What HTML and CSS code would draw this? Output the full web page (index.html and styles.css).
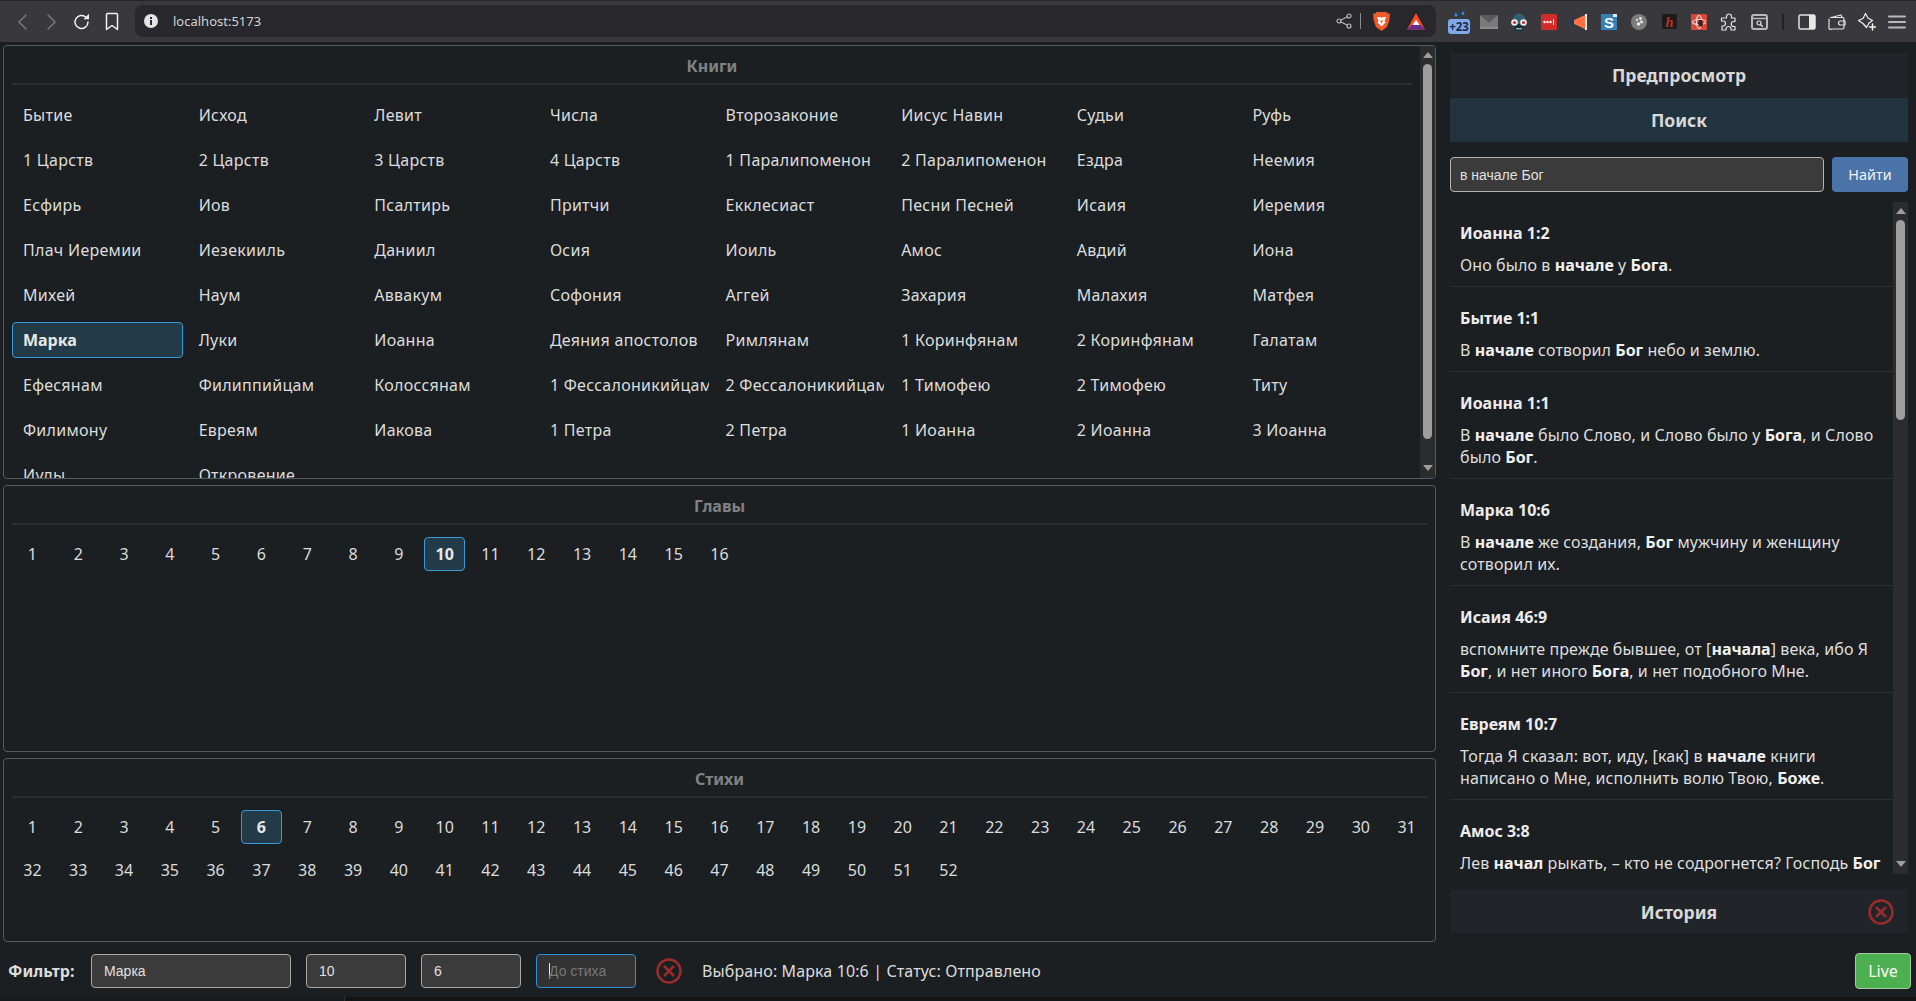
FILE: index.html
```html
<!DOCTYPE html>
<html lang="ru">
<head>
<meta charset="utf-8">
<title>localhost:5173</title>
<link rel="stylesheet" href="styles.css">
</head>
<body>
<header class="toolbar">
  <div class="nav">
    <span class="slot"><svg width="16" height="18" viewBox="0 0 16 18"><path d="M12 2 5 9l7 7" class="ln dim"/></svg></span>
    <span class="slot"><svg width="16" height="18" viewBox="0 0 16 18"><path d="m4 2 7 7-7 7" class="ln dim"/></svg></span>
    <span class="slot"><svg width="20" height="20" viewBox="0 0 20 20"><path d="M16 10a6.500 6.500 0 1 1-2-4.700" class="ln white"/><path d="M11.500 7.200h5.500V1.800z" class="fill-white"/></svg></span>
    <span class="slot"><svg width="16" height="20" viewBox="0 0 16 20"><path d="M2.500 2.500a1 1 0 0 1 1-1h9a1 1 0 0 1 1 1v15L8 13.500 2.500 17.500z" class="ln white"/></svg></span>
  </div>
  <div class="omnibox">
    <svg class="info" width="14" height="14" viewBox="0 0 14 14"><circle cx="7" cy="7" r="7" fill="#e4e4e4"/><rect x="6" y="6" width="2" height="5" fill="#2a292e"/><rect x="6" y="3" width="2" height="2" fill="#2a292e"/></svg>
    <span class="url">localhost:5173</span>
    <span class="omni-end">
      <svg width="16" height="16" viewBox="0 0 16 16"><circle cx="13" cy="3" r="2" class="ln gray thin"/><circle cx="3" cy="8" r="2" class="ln gray thin"/><circle cx="13" cy="13" r="2" class="ln gray thin"/><path d="M5 7l6-3M5 9l6 3" class="ln gray thin"/></svg>
      <i class="omni-sep"></i>
      <svg class="brave" width="17" height="19" viewBox="0 0 17 19"><path d="M3.500 0h10l1.500 1.800 2 -.3-.6 6.500-2.400 7-5.500 4-5.500-4L.6 8 0 1.500l2 .3z" fill="#f0592a"/><path d="M4 5h3l1.500 1L10 5h3l-1.500 4 1 1.500L10 13l-1.500 1.500L7 13l-2.500-2.500 1-1.500z" fill="#fff"/><path d="M7 8.500h3l-1.500 3z" fill="#f0592a"/></svg>
      <svg class="bat" width="18" height="17" viewBox="0 0 18 17"><path d="M9 0 0 16.500h18z" fill="#ff4724"/><path d="M0 16.500 4.500 12h9l4.500 4.500z" fill="#662d91"/><path d="M9 6.500 5.500 12h7z" fill="#fff"/></svg>
    </span>
  </div>
  <div class="exts">
    <span class="slot badge-slot"><svg width="22" height="24" viewBox="0 0 22 24"><path d="M8 1.500 9.500 4a1.500 1.500 0 0 1-3 0zM15 0l1.500 2.500a1.500 1.500 0 0 1-3 0z" fill="#2f8fe6"/><rect x="0" y="8" width="22" height="15" rx="3" fill="#7fa9ea"/><text x="11" y="20" text-anchor="middle" class="badge-text">+23</text></svg></span>
    <span class="slot"><svg width="18" height="16" viewBox="0 0 18 16"><rect y="1" width="18" height="14" fill="#7a7a7a"/><path d="M0 1h18L9 9z" fill="#5b5b5b"/><path d="M0 15h18v-2H0z" fill="#8d8d8d"/></svg></span>
    <span class="slot"><svg width="20" height="20" viewBox="0 0 20 20"><path d="M3 10a7 8.500 0 0 1 14 0v3H3z" fill="#2f6170"/><path d="M5 12h10l-1 7H6z" fill="#1c3038"/><rect x="7" y="16" width="6" height="1.500" fill="#8aa"/><circle cx="5.500" cy="10.500" r="3.300" fill="#eee"/><circle cx="14.500" cy="10.500" r="3.300" fill="#eee"/><circle cx="5.500" cy="10.500" r="1.600" fill="#c0392b"/><circle cx="14.500" cy="10.500" r="1.600" fill="#c0392b"/></svg></span>
    <span class="slot"><svg width="16" height="16" viewBox="0 0 16 16"><rect width="16" height="16" rx="1.500" fill="#d32b27"/><circle cx="3.500" cy="8" r="1.200" fill="#fff"/><circle cx="6.500" cy="8" r="1.200" fill="#fff"/><circle cx="9.500" cy="8" r="1.200" fill="#fff"/><rect x="12" y="5" width="1" height="6" fill="#fff"/></svg></span>
    <span class="slot"><svg width="18" height="16" viewBox="0 0 18 16"><circle cx="4" cy="8" r="4" fill="#1d3a55"/><path d="M4 6 15 1v14L4 10z" fill="#ff7143"/><rect x="15" y="0" width="2" height="16" fill="#eee"/></svg></span>
    <span class="slot"><svg width="16" height="16" viewBox="0 0 16 16"><rect width="16" height="16" fill="#3680b8"/><rect x="12" width="4" height="3" fill="#e8e8e8"/><text x="8" y="14" text-anchor="middle" class="s-logo">S</text></svg></span>
    <span class="slot"><svg width="16" height="16" viewBox="0 0 16 16"><circle cx="8" cy="8" r="8" fill="#7d7d7d"/><circle cx="9.500" cy="4.500" r="1.400" fill="#eee"/><circle cx="6" cy="6" r="1.100" fill="#eee"/><circle cx="10.500" cy="8" r="1.400" fill="#eee"/><circle cx="7.500" cy="10" r="1.800" fill="#eee"/></svg></span>
    <span class="slot"><svg width="15" height="15" viewBox="0 0 15 15"><rect width="15" height="15" rx="1" fill="#1c1c1c"/><text x="7.500" y="12.500" text-anchor="middle" class="h-logo">h</text></svg></span>
    <span class="slot"><svg width="16" height="16" viewBox="0 0 16 16"><rect width="16" height="16" rx="1" fill="#d8473c"/><ellipse cx="8" cy="8" rx="6.500" ry="2.500" fill="none" stroke="#f6d5cf" stroke-width="1.200"/><ellipse cx="8" cy="8" rx="2.500" ry="6.500" fill="none" stroke="#f6d5cf" stroke-width="1.200"/><path d="M8 6h3l1 5-2 2-3-3z" fill="#3a2020"/></svg></span>
    <span class="slot"><svg width="18" height="18" viewBox="0 0 18 18"><path d="M6.500 3.500a2.500 2.500 0 0 1 5 0V5h3.500v3.500h-1.300a2.500 2.500 0 0 0 0 5H15V17h-4v-1a2.500 2.500 0 0 0-5 0v1H2v-4h1a2.500 2.500 0 0 0 0-5H1.500V5h5z" class="ln pale thin"/></svg></span>
    <span class="slot"><svg width="17" height="16" viewBox="0 0 17 16"><rect x="1" y="1" width="15" height="14" rx="2" class="ln gray thick"/><path d="M1 4.500h15" class="ln gray"/><circle cx="8" cy="9" r="2" class="ln pale thin"/><path d="m9.500 10.500 2 2" class="ln pale thin"/></svg></span>
    <span class="slot sep-slot"><i class="dark-sep"></i></span>
    <span class="slot"><svg width="18" height="16" viewBox="0 0 18 16"><rect x="1" y="1" width="16" height="14" rx="1.500" class="ln pale"/><rect x="11" y="1" width="6" height="14" fill="#e8e8e8"/></svg></span>
    <span class="slot"><svg width="18" height="16" viewBox="0 0 18 16"><path d="M3 3.500 13 1l1 2.500M2.500 3.500h12a1.500 1.500 0 0 1 1.500 1.500v8.500a1.500 1.500 0 0 1-1.500 1.500h-11A1.500 1.500 0 0 1 1 13.500V5" class="ln pale thin"/><path d="M17 7h-4.500a1.500 1.500 0 0 0 0 4H17z" class="ln pale thin"/></svg></span>
    <span class="slot"><svg width="20" height="19" viewBox="0 0 20 19"><path d="M8.500 1.500 11 6l4.500 2.500L12 11l-2.500 4.500L6 11.500 1.500 8.500 6 6.500z" class="ln white thin"/><path d="M15.500 12v6M12.500 15h6" class="ln white"/></svg></span>
    <span class="slot"><svg width="18" height="14" viewBox="0 0 18 14"><path d="M1 1.500h16M1 7h16M1 12.500h16" class="ln gray thick"/></svg></span>
  </div>
</header>

<main class="app">
  <div class="workspace">
    <section class="columns">
      <div class="panel panel-books">
        <div class="panel-body">
          <h2 class="panel-title">Книги</h2>
          <div class="books">
            <button class="item">Бытие</button><button class="item">Исход</button><button class="item">Левит</button><button class="item">Числа</button><button class="item">Второзаконие</button><button class="item">Иисус Навин</button><button class="item">Судьи</button><button class="item">Руфь</button>
            <button class="item">1 Царств</button><button class="item">2 Царств</button><button class="item">3 Царств</button><button class="item">4 Царств</button><button class="item">1 Паралипоменон</button><button class="item">2 Паралипоменон</button><button class="item">Ездра</button><button class="item">Неемия</button>
            <button class="item">Есфирь</button><button class="item">Иов</button><button class="item">Псалтирь</button><button class="item">Притчи</button><button class="item">Екклесиаст</button><button class="item">Песни Песней</button><button class="item">Исаия</button><button class="item">Иеремия</button>
            <button class="item">Плач Иеремии</button><button class="item">Иезекииль</button><button class="item">Даниил</button><button class="item">Осия</button><button class="item">Иоиль</button><button class="item">Амос</button><button class="item">Авдий</button><button class="item">Иона</button>
            <button class="item">Михей</button><button class="item">Наум</button><button class="item">Аввакум</button><button class="item">Софония</button><button class="item">Аггей</button><button class="item">Захария</button><button class="item">Малахия</button><button class="item">Матфея</button>
            <button class="item active">Марка</button><button class="item">Луки</button><button class="item">Иоанна</button><button class="item">Деяния апостолов</button><button class="item">Римлянам</button><button class="item">1 Коринфянам</button><button class="item">2 Коринфянам</button><button class="item">Галатам</button>
            <button class="item">Ефесянам</button><button class="item">Филиппийцам</button><button class="item">Колоссянам</button><button class="item">1 Фессалоникийцам</button><button class="item">2 Фессалоникийцам</button><button class="item">1 Тимофею</button><button class="item">2 Тимофею</button><button class="item">Титу</button>
            <button class="item">Филимону</button><button class="item">Евреям</button><button class="item">Иакова</button><button class="item">1 Петра</button><button class="item">2 Петра</button><button class="item">1 Иоанна</button><button class="item">2 Иоанна</button><button class="item">3 Иоанна</button>
            <button class="item">Иуды</button><button class="item">Откровение</button>
          </div>
        </div>
        <div class="scrollbar bar-books">
          <i class="arrow-up"></i><i class="thumb thumb-books"></i><i class="arrow-down"></i>
        </div>
      </div>

      <div class="panel panel-chapters">
        <div class="panel-body">
          <h2 class="panel-title">Главы</h2>
          <div class="numbers">
            <button class="num">1</button><button class="num">2</button><button class="num">3</button><button class="num">4</button><button class="num">5</button><button class="num">6</button><button class="num">7</button><button class="num">8</button><button class="num">9</button><button class="num active">10</button><button class="num">11</button><button class="num">12</button><button class="num">13</button><button class="num">14</button><button class="num">15</button><button class="num">16</button>
          </div>
        </div>
      </div>

      <div class="panel panel-verses">
        <div class="panel-body">
          <h2 class="panel-title">Стихи</h2>
          <div class="numbers">
            <button class="num">1</button><button class="num">2</button><button class="num">3</button><button class="num">4</button><button class="num">5</button><button class="num active">6</button><button class="num">7</button><button class="num">8</button><button class="num">9</button><button class="num">10</button><button class="num">11</button><button class="num">12</button><button class="num">13</button><button class="num">14</button><button class="num">15</button><button class="num">16</button><button class="num">17</button><button class="num">18</button><button class="num">19</button><button class="num">20</button><button class="num">21</button><button class="num">22</button><button class="num">23</button><button class="num">24</button><button class="num">25</button><button class="num">26</button><button class="num">27</button><button class="num">28</button><button class="num">29</button><button class="num">30</button><button class="num">31</button>
            <button class="num">32</button><button class="num">33</button><button class="num">34</button><button class="num">35</button><button class="num">36</button><button class="num">37</button><button class="num">38</button><button class="num">39</button><button class="num">40</button><button class="num">41</button><button class="num">42</button><button class="num">43</button><button class="num">44</button><button class="num">45</button><button class="num">46</button><button class="num">47</button><button class="num">48</button><button class="num">49</button><button class="num">50</button><button class="num">51</button><button class="num">52</button>
          </div>
        </div>
      </div>
    </section>

    <aside class="side">
      <div class="side-head">Предпросмотр</div>
      <div class="side-head side-head-active">Поиск</div>
      <form class="search">
        <input class="search-input" type="text" value="в начале Бог">
        <button class="search-btn" type="button">Найти</button>
      </form>
      <div class="results">
        <div class="results-list">
          <article class="result"><h3 class="result-ref">Иоанна 1:2</h3><p class="result-text">Оно было в <b>начале</b> у <b>Бога</b>.</p></article>
          <article class="result"><h3 class="result-ref">Бытие 1:1</h3><p class="result-text">В <b>начале</b> сотворил <b>Бог</b> небо и землю.</p></article>
          <article class="result"><h3 class="result-ref">Иоанна 1:1</h3><p class="result-text">В <b>начале</b> было Слово, и Слово было у <b>Бога</b>, и Слово было <b>Бог</b>.</p></article>
          <article class="result"><h3 class="result-ref">Марка 10:6</h3><p class="result-text">В <b>начале</b> же создания, <b>Бог</b> мужчину и женщину сотворил их.</p></article>
          <article class="result"><h3 class="result-ref">Исаия 46:9</h3><p class="result-text">вспомните прежде бывшее, от [<b>начала</b>] века, ибо Я <b>Бог</b>, и нет иного <b>Бога</b>, и нет подобного Мне.</p></article>
          <article class="result"><h3 class="result-ref">Евреям 10:7</h3><p class="result-text">Тогда Я сказал: вот, иду, [как] в <b>начале</b> книги написано о Мне, исполнить волю Твою, <b>Боже</b>.</p></article>
          <article class="result result-last"><h3 class="result-ref">Амос 3:8</h3><p class="result-text">Лев <b>начал</b> рыкать, – кто не содрогнется? Господь <b>Бог</b></p></article>
        </div>
        <div class="scrollbar bar-results">
          <i class="arrow-up"></i><i class="thumb thumb-results"></i><i class="arrow-down"></i>
        </div>
      </div>
      <div class="side-head history">
        <span></span><span>История</span>
        <svg class="close-big" width="26" height="26" viewBox="0 0 26 26"><circle cx="13" cy="13" r="11.500" class="x-line"/><path d="m8 8 10 10M18 8 8 18" class="x-line"/></svg>
      </div>
    </aside>
  </div>

  <footer class="filter">
    <strong class="filter-label">Фильтр:</strong>
    <input class="field field-book" type="text" value="Марка">
    <input class="field field-num" type="text" value="10">
    <input class="field field-num" type="text" value="6">
    <span class="field field-num field-focus"><i class="caret"></i>До стиха</span>
    <svg class="close-small" width="26" height="26" viewBox="0 0 26 26"><circle cx="13" cy="13" r="11.500" class="x-line"/><path d="m8 8 10 10M18 8 8 18" class="x-line"/></svg>
    <span class="status">Выбрано: Марка 10:6 | Статус: Отправлено</span>
    <button class="live" type="button">Live</button>
  </footer>
</main>
<div class="strip"><i class="strip-left"></i></div>
</body>
</html>
```

FILE: styles.css
```css
* { box-sizing: border-box; }
html, body { margin: 0; height: 1001px; overflow: hidden; }
body {
  display: flex;
  flex-direction: column;
  background: #1b1f22;
  color: #e0e0e0;
  font-family: "Noto Sans", sans-serif;
  font-size: 16px;
  line-height: 22px;
}
h2, h3, p { margin: 0; }
button { font-family: inherit; cursor: pointer; }

/* browser chrome */
.toolbar {
  flex: none;
  height: 42px;
  display: flex;
  align-items: center;
  background: #38383d;
  border-top: 1px solid #27272b;
  padding: 0 4px 0 7px;
}
.nav { display: flex; width: 128px; flex: none; }
.slot { width: 30px; height: 32px; flex: none; display: flex; align-items: center; justify-content: center; }
.omnibox {
  flex: none;
  width: 1301px;
  height: 32px;
  margin-top: -1px;
  background: #28272c;
  border-radius: 8px;
  display: flex;
  align-items: center;
  padding: 0 11px 0 9px;
}
.info { margin: 0 15px 0 0; flex: none; }
.url { color: #d2d2d4; font-size: 13px; }
.omni-end { margin-left: auto; display: flex; align-items: center; }
.omni-sep { width: 1px; height: 16px; background: #8a8a8a; margin: 0 0 0 8px; }
.brave { margin-left: 12px; }
.bat { margin-left: 17px; }
.exts { display: flex; margin-left: 8px; flex: none; }
.badge-slot svg { margin-top: 3px; }
.sep-slot { width: 18px; }
.dark-sep { width: 2px; height: 16px; background: #232327; }
.ln { fill: none; stroke-width: 1.500; stroke-linecap: round; stroke-linejoin: round; }
.thin { stroke-width: 1.200; }
.thick { stroke-width: 2; }
.dim { stroke: #77777c; }
.white { stroke: #f2f2f2; }
.gray { stroke: #b9b9bb; }
.pale { stroke: #e2e2e2; }
.fill-white { fill: #f2f2f2; }
.badge-text { font: 700 11.500px "Noto Sans", sans-serif; fill: #1b2a44; }
.s-logo { font: 700 15px "Liberation Sans", sans-serif; fill: #fff; }
.h-logo { font: italic 700 14px "Liberation Serif", serif; fill: #cc2a24; }

/* app */
.app { flex: 1; min-height: 0; display: flex; flex-direction: column; }
.workspace { display: flex; padding: 3px 0 0 3px; height: 900px; flex: none; }
.columns { width: 1433px; flex: none; display: flex; flex-direction: column; gap: 6px; }
.panel {
  border: 1px solid #555a5e;
  border-radius: 4px;
  display: flex;
  overflow: hidden;
  flex: none;
}
.panel-books { height: 434px; }
.panel-chapters { height: 267px; }
.panel-verses { height: 184px; }
.panel-body { flex: 1; min-width: 0; padding: 0 8px; overflow: hidden; }
.panel-title {
  font-size: 16px;
  font-weight: 700;
  line-height: 22px;
  color: #808285;
  text-align: center;
  padding: 9px 0 6px;
  border-bottom: 2px solid #2b2f32;
  margin-bottom: 12px;
}
.books { display: grid; grid-template-columns: repeat(8, 1fr); gap: 9px 5px; }
.item {
  height: 36px;
  min-width: 0;
  padding: 0 10px;
  border: 1px solid transparent;
  border-radius: 4px;
  background: none;
  color: #dcdcdc;
  font-size: 16px;
  letter-spacing: 0.28px;
  text-align: left;
  white-space: nowrap;
  overflow: hidden;
}
.numbers { display: grid; grid-template-columns: repeat(31, 1fr); gap: 9px 5px; }
.num {
  height: 34px;
  min-width: 0;
  padding: 0;
  border: 1px solid transparent;
  border-radius: 4px;
  background: none;
  color: #dcdcdc;
  font-size: 16px;
  text-align: center;
}
.active {
  background: #233a49;
  border-color: #3a9ad9;
  font-weight: 700;
  color: #e8e8e8;
  letter-spacing: 0;
}

/* scrollbars */
.scrollbar {
  flex: none;
  width: 15px;
  background: #2a2c2e;
  display: flex;
  flex-direction: column;
  align-items: center;
}
.arrow-up, .arrow-down { width: 0; height: 0; border: 5px solid transparent; border-width: 0 5px; flex: none; }
.arrow-up { border-bottom: 6px solid #9e9e9e; margin-top: 6px; }
.arrow-down { border-top: 6px solid #9e9e9e; margin: auto 0 7px; }
.thumb { width: 9px; flex: none; background: #9e9e9e; border-radius: 5px; }
.thumb-books { height: 375px; margin-top: 6px; }
.thumb-results { height: 200px; margin-top: 6px; }

/* right side */
.side { width: 458px; flex: none; margin-left: 14px; padding-top: 8px; display: flex; flex-direction: column; }
.side-head {
  flex: none;
  height: 44px;
  line-height: 44px;
  background: #212529;
  color: #d8d8d8;
  font-weight: 700;
  font-size: 17.600px;
  text-align: center;
}
.side-head-active { background: #20333e; margin-top: 1px; }
.search { flex: none; display: flex; gap: 8px; margin: 15px 0 10px; }
.search-input {
  flex: 1;
  min-width: 0;
  height: 35px;
  padding: 0 9px;
  border: 1px solid #b4b4b4;
  border-radius: 4px;
  background: #3b3b3b;
  color: #e0e0e0;
  font: 14px "Liberation Sans", sans-serif;
}
.search-btn {
  width: 76px;
  height: 35px;
  padding: 0;
  border: 0;
  border-radius: 4px;
  background: #4a74a8;
  color: #f2f2f2;
  font-size: 14.400px;
}
.results { height: 672px; flex: none; display: flex; overflow: hidden; }
.results-list { flex: 1; min-width: 0; overflow: hidden; }
.result { padding: 20px 10px 10px; border-bottom: 1px solid #2b2f32; }
.result-ref { font-size: 16px; font-weight: 700; line-height: 22px; color: #ececec; margin-bottom: 10px; }
.result-text { font-size: 16px; line-height: 22px; color: #dedede; letter-spacing: 0.1px; }
.result-text b { color: #f0f0f0; letter-spacing: 0; }
.history {
  margin-top: 15px;
  display: grid;
  grid-template-columns: 1fr auto 1fr;
  align-items: center;
  padding: 1px 14px 0;
  line-height: 22px;
}
.close-big { justify-self: end; }
.x-line { fill: none; stroke: #9c2b2b; stroke-width: 2.500; }

/* filter */
.filter {
  flex: none;
  display: flex;
  align-items: center;
  height: 34px;
  margin-top: 12px;
  padding: 0 5px 0 8px;
}
.filter-label { width: 83px; flex: none; font-weight: 700; color: #dcdcdc; }
.field {
  height: 34px;
  flex: none;
  padding: 0 12px;
  border: 1px solid #a8a8a8;
  border-radius: 4px;
  background: #3b3b3b;
  color: #e0e0e0;
  font: 14px/32px "Liberation Sans", sans-serif;
  outline: none;
}
.field-book { width: 200px; margin-right: 15px; }
.field-num { width: 100px; margin-right: 15px; }
.field-focus { border-color: #2f8fd8; color: #777; display: flex; align-items: center; background: #333; margin-right: 20px; }
.caret { width: 1px; height: 16px; background: #e8e8e8; margin-right: -1px; flex: none; }
.close-small { flex: none; margin-right: 20px; }
.status { color: #dcdcdc; letter-spacing: 0.12px; }
.live {
  margin-left: auto;
  width: 56px;
  height: 36px;
  padding: 0;
  border: 1px solid #a5c9a7;
  border-radius: 4px;
  background: #4caf50;
  color: #fff;
  font-size: 16px;
}
.strip { flex: none; height: 4px; background: #121416; }
.strip-left { display: block; width: 345px; height: 100%; background: #171a1d; border-right: 1px solid #333; }
```
